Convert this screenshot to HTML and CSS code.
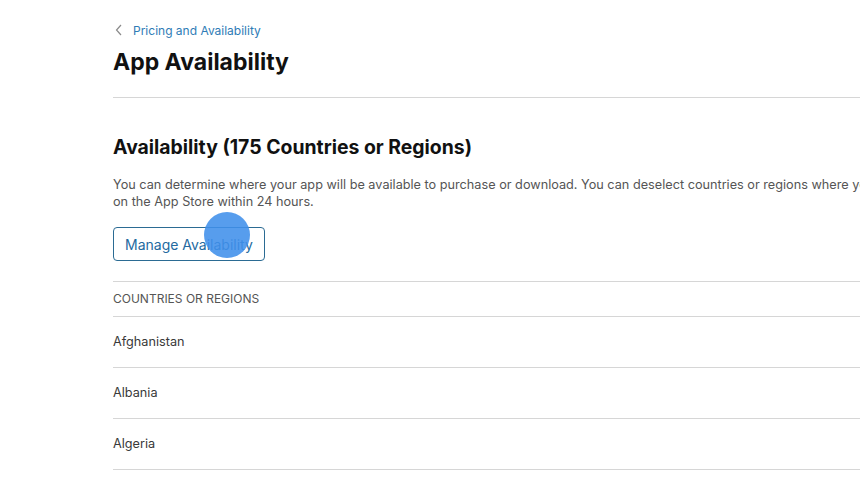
FILE: index.html
```html
<!DOCTYPE html>
<html lang="en">
<head>
<meta charset="utf-8">
<title>App Availability</title>
<link rel="stylesheet" href="styles.css">
</head>
<body>
<main class="page">
  <nav class="crumb">
    <svg class="chev" width="8" height="12" viewBox="0 0 8 12"><path d="M6 1 L1.5 6 L6 11" fill="none" stroke="#8a8a8a" stroke-width="1.2"/></svg>
    <a href="#" class="crumb-link">Pricing and Availability</a>
  </nav>
  <h1 class="title">App Availability</h1>
  <section class="section">
    <h2 class="heading">Availability (175 Countries or Regions)</h2>
    <p class="desc">You can determine where your app will be available to purchase or download. You can deselect countries or regions where you don't want your app to be available, and the changes will be reflected<br>on the App Store within 24 hours.</p>
    <div class="btn-wrap">
      <button class="btn">Manage Availability</button>
      <span class="tap"></span>
    </div>
  </section>
  <div class="list">
    <div class="list-head">COUNTRIES OR REGIONS</div>
    <div class="row">Afghanistan</div>
    <div class="row">Albania</div>
    <div class="row">Algeria</div>
  </div>
</main>
</body>
</html>
```
FILE: styles.css
```css
html, body { margin: 0; padding: 0; background: #fff; }
body { overflow: hidden; width: 860px; height: 480px; font-family: Inter, "Noto Sans", sans-serif; color: #1d1d1f; }
.page { margin-left: 113px; width: 1000px; padding-top: 22px; }
.crumb { display: flex; align-items: center; height: 16px; }
.chev { margin-left: 2px; margin-right: 10px; }
.crumb-link { font-size: 12px; color: #2f7cb6; text-decoration: none; }
.title { margin: 8px 0 0; font-size: 23px; font-weight: 700; line-height: 32px; color: #111; letter-spacing: 0; }
.section { border-top: 1px solid #d6d6d6; margin-top: 19px; padding-top: 36px; }
.heading { margin: 0; font-size: 19.4px; font-weight: 700; line-height: 26px; color: #111; }
.desc { margin: 16px 0 0; font-size: 12.7px; line-height: 17px; color: #555; white-space: nowrap; }
.btn-wrap { position: relative; margin-top: 17px; width: max-content; }
.btn { display: block; height: 34px; padding: 0 11px; border: 1px solid #2b6b93; border-radius: 4px; background: #fff; color: #246a9f; font-family: inherit; font-size: 14px; }
.tap { position: absolute; left: 91px; top: -15px; width: 46px; height: 46px; border-radius: 50%; background: rgba(64, 144, 234, 0.88); }
.list { margin-top: 20px; border-top: 1px solid #d6d6d6; }
.list-head { height: 34px; line-height: 34px; font-size: 12px; color: #555; border-bottom: 1px solid #d6d6d6; }
.row { height: 50px; line-height: 50px; font-size: 12.7px; color: #3a3a3a; border-bottom: 1px solid #d6d6d6; }
```
